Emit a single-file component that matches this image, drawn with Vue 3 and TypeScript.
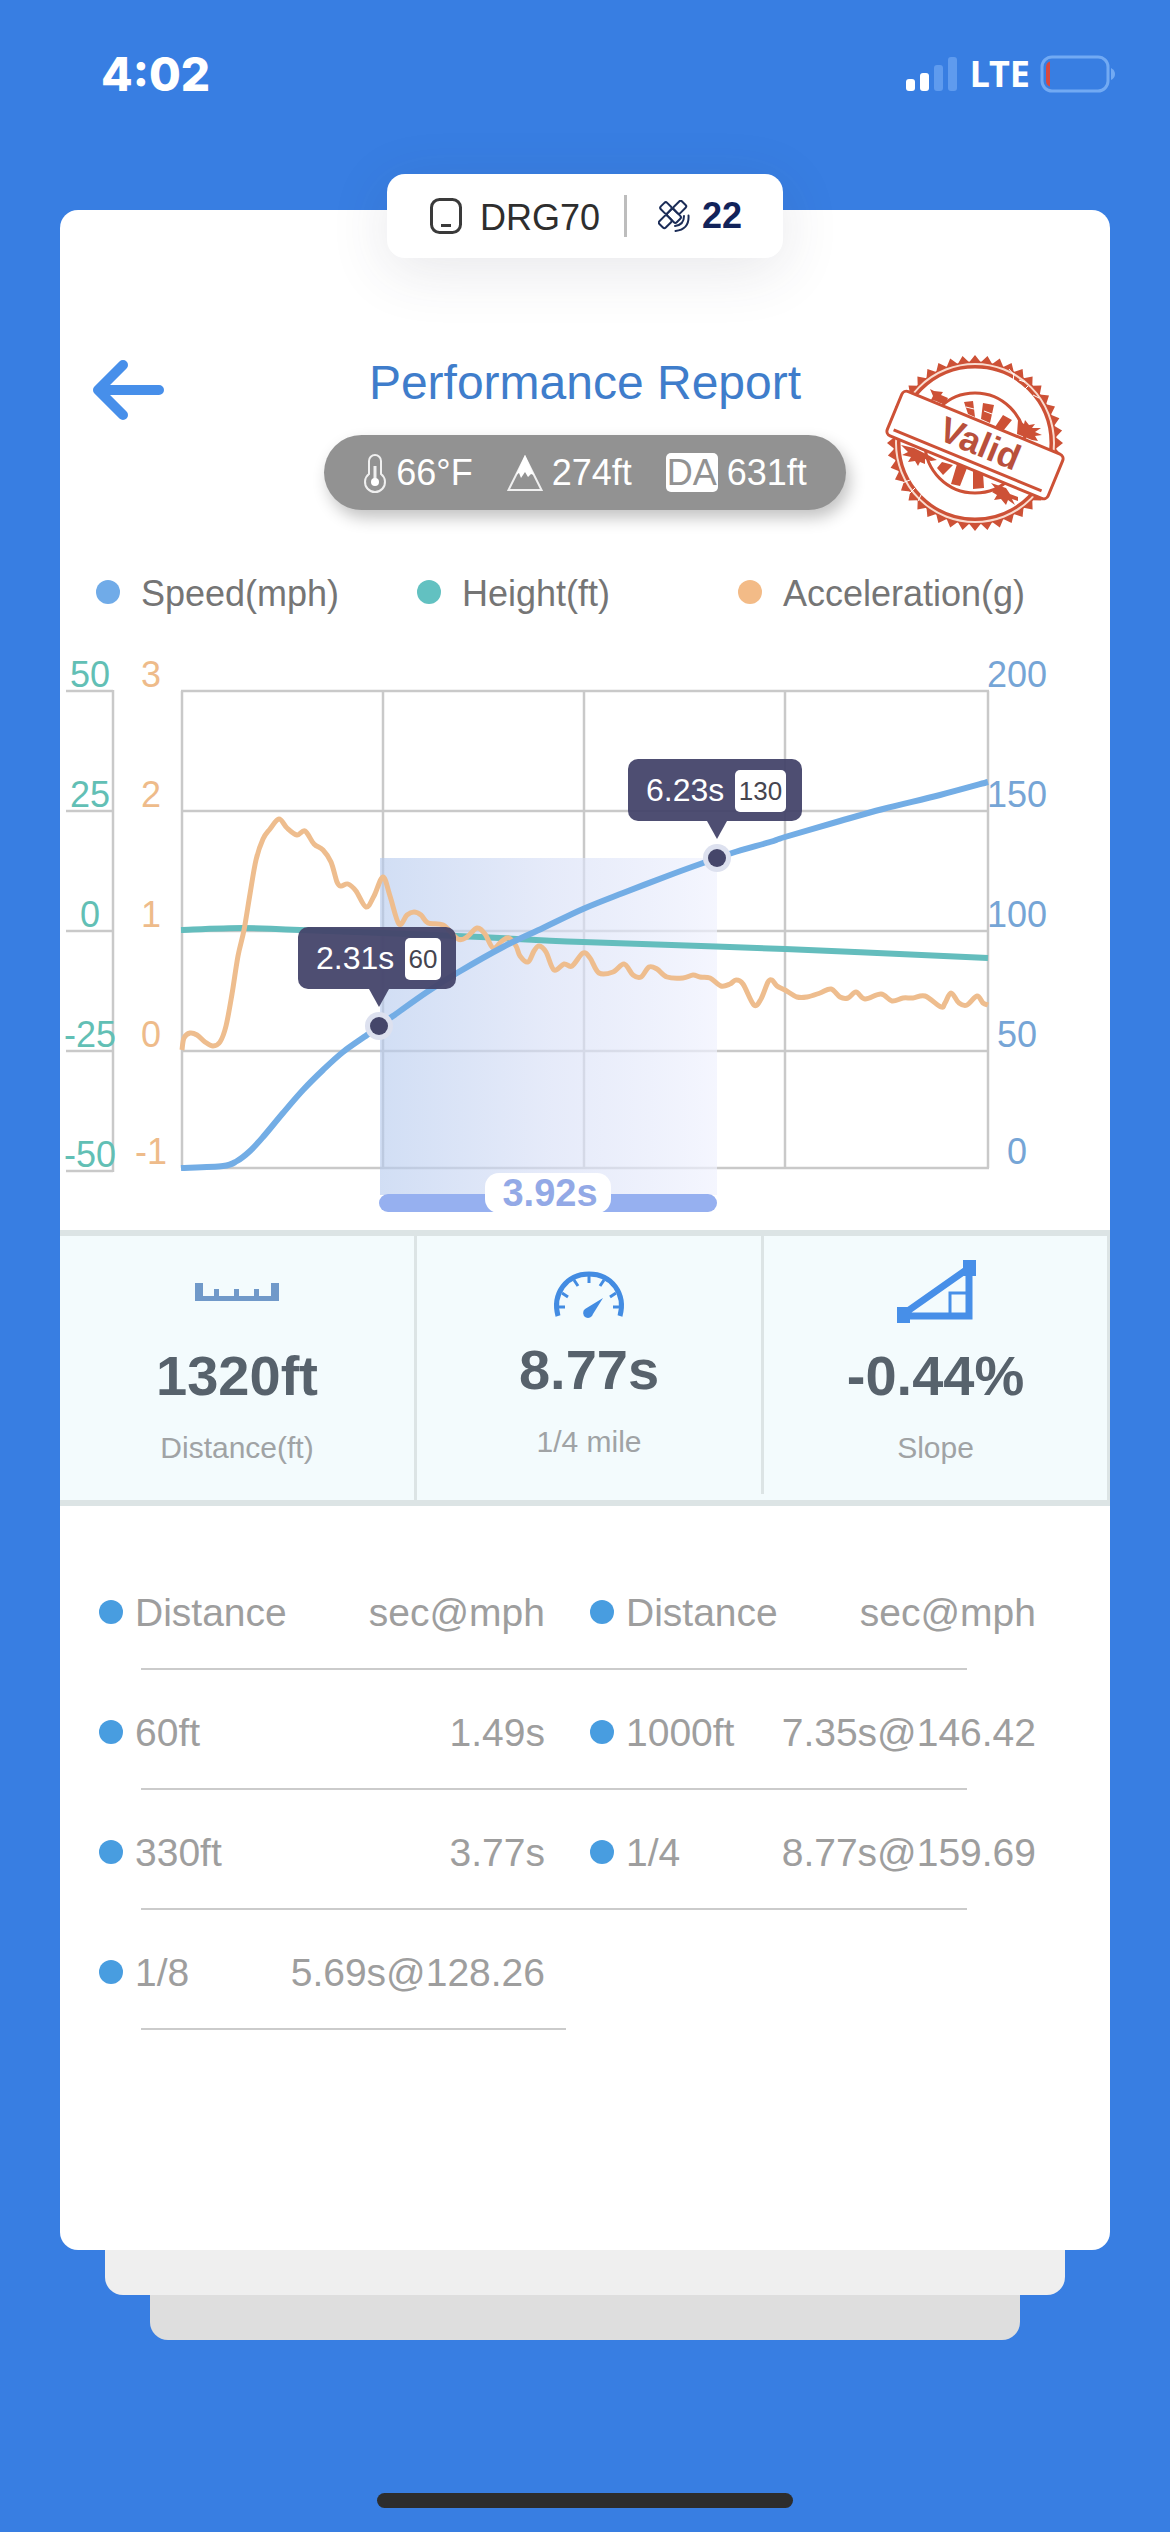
<script setup lang="ts">
type Point = [number, number]

interface Series {
  name: string
  color: string
  width: number
  points: Point[]
}

interface Marker {
  x: number
  y: number
  time: string
  speed: string
  left: number
  width: number
  badge: number
}

interface Split {
  distance: string
  result: string
}

const legend = [
  { label: 'Speed(mph)', color: '#70abe8' },
  { label: 'Height(ft)', color: '#62c1c1' },
  { label: 'Acceleration(g)', color: '#f3bb87' },
]

const rows = [41, 161, 281, 401, 518]
const columns = [122, 323, 524, 725, 928]
const leftTicks = [41, 161, 281, 401, 521]

const heightLabels = ['50', '25', '0', '-25', '-50']
const accelLabels = ['3', '2', '1', '0', '-1']
const speedLabels = ['200', '150', '100', '50', '0']
const labelBaselines = [37, 157, 277, 397, 514]

const series: Series[] = [
  {
    name: 'height',
    color: '#64bdbd',
    width: 6,
    points: [[121, 280], [183, 278], [240, 280], [397, 286], [523, 292], [725, 299], [928, 308]],
  },
  {
    name: 'acceleration',
    color: '#eebd8e',
    width: 5,
    points: [
      [122, 400], [124, 388], [130, 383], [137, 385], [145, 392], [153, 396], [160, 392], [166, 376],
      [172, 344], [178, 306], [184, 280], [190, 244], [196, 210], [203, 189], [210, 179], [219, 169],
      [227, 178], [237, 185], [245, 181], [254, 194], [263, 200], [271, 212], [277, 232], [281, 236],
      [288, 234], [296, 241], [306, 257], [314, 246], [323, 227], [330, 246], [339, 274], [347, 265],
      [354, 262], [361, 265], [368, 273], [383, 275], [398, 289], [407, 287], [417, 278], [425, 284],
      [433, 298], [442, 291], [449, 288], [456, 296], [460, 306], [468, 312], [474, 301], [479, 296],
      [486, 302], [494, 320], [504, 314], [512, 316], [523, 303], [530, 308], [539, 323], [553, 322],
      [564, 314], [573, 325], [581, 327], [589, 317], [597, 319], [607, 327], [623, 328], [633, 325],
      [640, 327], [650, 328], [661, 336], [670, 334], [676, 330], [683, 334], [694, 355], [701, 349],
      [708, 332], [712, 330], [717, 336], [725, 340], [737, 347], [747, 347], [760, 343], [771, 339],
      [780, 347], [788, 348], [796, 342], [805, 349], [821, 344], [832, 351], [843, 348], [853, 348],
      [865, 346], [881, 357], [885, 353], [891, 343], [899, 353], [907, 355], [917, 346], [923, 353],
      [928, 355],
    ],
  },
  {
    name: 'speed',
    color: '#73ade5',
    width: 6,
    points: [
      [121, 518], [163, 516], [177, 511], [190, 501], [203, 487], [223, 463], [243, 440], [263, 420],
      [283, 402], [307, 385], [319, 376], [333, 366], [367, 342], [397, 323], [443, 297], [483, 278],
      [523, 259], [563, 243], [610, 225], [643, 213], [672, 203], [710, 192], [725, 187], [780, 171],
      [823, 159], [880, 145], [928, 132],
    ],
  },
]

/* Catmull-Rom spline through the samples, written as cubic Béziers. */
function smoothPath(points: Point[]): string {
  let d = `M${points[0][0]} ${points[0][1]}`
  for (let i = 0; i < points.length - 1; i++) {
    const p0 = points[Math.max(i - 1, 0)]
    const p1 = points[i]
    const p2 = points[i + 1]
    const p3 = points[Math.min(i + 2, points.length - 1)]
    d += ` C${p1[0] + (p2[0] - p0[0]) / 6} ${p1[1] + (p2[1] - p0[1]) / 6}`
    d += ` ${p2[0] - (p3[0] - p1[0]) / 6} ${p2[1] - (p3[1] - p1[1]) / 6} ${p2[0]} ${p2[1]}`
  }
  return d
}

const markers: Marker[] = [
  { x: 319, y: 376, time: '2.31s', speed: '60', left: 238, width: 158, badge: 36 },
  { x: 657, y: 208, time: '6.23s', speed: '130', left: 568, width: 174, badge: 51 },
]

/* Serrated rim of the stamp. */
const teeth = 44
const rim = Array.from({ length: teeth * 2 }, (_, i) => {
  const radius = i % 2 === 0 ? 88 : 81
  const angle = (Math.PI * i) / teeth
  return `${(90 + radius * Math.sin(angle)).toFixed(1)},${(88 - radius * Math.cos(angle)).toFixed(1)}`
}).join(' ')

const splitRows: Split[][] = [
  [{ distance: '60ft', result: '1.49s' }, { distance: '1000ft', result: '7.35s@146.42' }],
  [{ distance: '330ft', result: '3.77s' }, { distance: '1/4', result: '8.77s@159.69' }],
  [{ distance: '1/8', result: '5.69s@128.26' }],
]
</script>

<template>
  <div class="screen">
    <div class="status-bar">
      <span class="clock">4:02</span>
      <div class="status-icons">
        <svg width="52" height="34" viewBox="0 0 52 34" aria-label="Signal">
          <rect x="0" y="22" width="9" height="12" rx="3" fill="#fff" />
          <rect x="14" y="16" width="9" height="18" rx="3" fill="#fff" />
          <rect x="28" y="8" width="9" height="26" rx="3" fill="#5f9bee" />
          <rect x="42" y="0" width="9" height="34" rx="3" fill="#5f9bee" />
        </svg>
        <span class="network">LTE</span>
        <svg width="76" height="38" viewBox="0 0 76 38" aria-label="Battery">
          <rect x="2" y="2" width="66" height="34" rx="10" fill="none" stroke="#72aaf3" stroke-width="3" />
          <path d="M10 6.500v25q-4-1-4-6v-13q0-5 4-6z" fill="#d9493f" />
          <path d="M71 13q4 2 4 6t-4 6z" fill="#72aaf3" />
        </svg>
      </div>
    </div>

    <header class="device-tab">
      <svg class="device-icon" width="32" height="36" viewBox="0 0 32 36" fill="none" stroke="#3a3a3a">
        <rect x="1.500" y="1.500" width="29" height="33" rx="8" stroke-width="3" />
        <path d="M11 27.500h10" stroke-width="3" />
      </svg>
      <span class="device-name">DRG70</span>
      <span class="tab-divider"></span>
      <svg width="32" height="32" viewBox="0 0 32 32" fill="none" stroke="#1b2c57" stroke-width="2" stroke-linecap="round" stroke-linejoin="round">
        <g transform="translate(14.500 14.500) rotate(45)">
          <rect x="-14" y="-4.500" width="9.500" height="9" rx="2" />
          <rect x="-4.500" y="-4.500" width="13" height="9" rx="2" />
          <rect x="-4.500" y="-16" width="9" height="11.500" rx="2" />
          <rect x="-4.500" y="4.500" width="9" height="11.500" rx="2" />
        </g>
        <path d="M26 16q0 9-9 10M30.500 15.500q1 14-13 15.500" />
      </svg>
      <strong class="satellites">22</strong>
    </header>

    <main class="card">
      <section class="report-head">
        <button class="back" type="button" aria-label="Back">
          <svg width="72" height="60" viewBox="0 0 72 60" fill="none" stroke="#478fea" stroke-width="10" stroke-linecap="round" stroke-linejoin="round">
            <path d="M67 30H6M31 5L6 30l25 25" />
          </svg>
        </button>
        <div class="head-center">
          <h1>Performance Report</h1>
          <div class="conditions">
            <span class="condition">
              <svg width="24" height="40" viewBox="0 0 24 40" fill="none" stroke="#f0f0f0" stroke-width="2">
                <path d="M6 8a6 6 0 0 1 12 0v13a10 10 0 1 1-12 0z" />
                <path d="M12 13v16" stroke-width="3" />
                <circle cx="12" cy="29" r="4" fill="#fff" stroke="none" />
              </svg>
              66°F
            </span>
            <span class="condition">
              <svg width="36" height="38" viewBox="0 0 36 38">
                <path d="M18 3L34.500 36h-33z" fill="none" stroke="#f0f0f0" stroke-width="2" />
                <path d="M18 1L27 21l-3-1-3 3-3-5-4 6-2-5-3 2z" fill="#fff" />
              </svg>
              274ft
            </span>
            <span class="condition">
              <span class="da-badge">DA</span>
              631ft
            </span>
          </div>
        </div>
        <svg class="stamp" width="180" height="176" viewBox="0 0 180 176">
          <polygon :points="rim" fill="#cd5136" />
          <circle cx="90" cy="88" r="78" fill="#fff" stroke="#cd5136" stroke-width="7" />
          <circle cx="90" cy="88" r="79" fill="none" stroke="#fadccf" stroke-width="2" />
          <circle cx="90" cy="88" r="50" fill="none" stroke="#cd5136" stroke-width="3" />
          <g fill="#cd5136">
            <path d="M79 47l9-1 2 16-7-3zM98 48l11 2-4 18-9-4zM118 60l9 5-9 11-8-4z" />
            <path d="M52 113l5-6 11 3-10 10zM72 109l10 4-7 18-9-2zM88 115l10 3 1 15-11 1z" />
            <path d="M45 34l4 2 9 1-2 3 7 3-3 6-5-1-4-2-5-1 2-4zM133 65l6 4 1-4 4 5 6-1-3 4 9 0-6 4 7 3-7 1 3 5-6-1-15-6z" />
            <path d="M16 90l13 3 14 7 9 5-6 1-6-2 0 5-5-2-2 4-3-5-7 1 3-5-9-2 6-3zM106 128l15 5 4 6 8 3 0 4-6-2 3 6-7-5-2 5-5-6-7 1 3-5-5-3 4-3z" />
          </g>
          <g stroke="#fff" stroke-width="1" fill="none">
            <path d="M124 14l5 6M129 18l-1 9M134 25l6 2M143 31l-5 5M148 40l6 3M17 128l8-3M24 139l6-6M33 146l4-8M81 52l8 2M99 56l8 3" />
          </g>
          <g transform="translate(90 90) rotate(22.400)">
            <rect x="-87" y="-24" width="174" height="48" rx="5" fill="#fff" stroke="#cd5136" stroke-width="3" />
            <path d="M-81 17H79" stroke="#cd5136" stroke-width="3" />
            <text x="4" y="9" class="stamp-text">Valid</text>
          </g>
        </svg>
      </section>

      <ul class="legend">
        <li v-for="item in legend" :key="item.label">
          <span class="dot" :style="{ background: item.color }"></span>
          {{ item.label }}
        </li>
      </ul>

      <svg class="chart" viewBox="0 0 1050 580" role="img" aria-label="Speed, height and acceleration over time">
        <defs>
          <linearGradient id="interval" x1="0" x2="1" y1="0" y2="0">
            <stop offset="0" stop-color="#b5caee" stop-opacity="0.620" />
            <stop offset="0.500" stop-color="#d6def6" stop-opacity="0.620" />
            <stop offset="1" stop-color="#f0f2fe" stop-opacity="0.700" />
          </linearGradient>
        </defs>

        <g stroke="#c9c9c9" stroke-width="2.500" fill="none">
          <path v-for="y in rows" :key="`r${y}`" :d="`M121 ${y}H929`" />
          <path v-for="x in columns" :key="`c${x}`" :d="`M${x} 41V518`" />
          <path v-for="y in leftTicks" :key="`t${y}`" :d="`M6 ${y}H53`" />
          <path d="M53 40V522" />
        </g>

        <rect x="320" y="208" width="337" height="337" fill="url(#interval)" />

        <g class="axis">
          <text v-for="(label, i) in heightLabels" :key="`h${label}`" x="30" :y="leftTicks[i] - 4" fill="#62bfb5">{{ label }}</text>
          <text v-for="(label, i) in accelLabels" :key="`a${label}`" x="91" :y="labelBaselines[i]" fill="#eebb8a">{{ label }}</text>
          <text v-for="(label, i) in speedLabels" :key="`s${label}`" x="957" :y="labelBaselines[i]" fill="#76a5d6">{{ label }}</text>
        </g>

        <path
          v-for="line in series"
          :key="line.name"
          :d="smoothPath(line.points)"
          :stroke="line.color"
          :stroke-width="line.width"
          fill="none"
        />

        <g v-for="marker in markers" :key="marker.time">
          <circle :cx="marker.x" :cy="marker.y" r="14" fill="#dde1ef" />
          <circle :cx="marker.x" :cy="marker.y" r="9" fill="#45466a" />
          <g fill="#45446a" fill-opacity="0.950">
            <rect :x="marker.left" :y="marker.y - 99" :width="marker.width" height="62" rx="10" />
            <path :d="`M${marker.x - 10} ${marker.y - 37}h20l-10 18z`" />
          </g>
          <text class="marker-time" :x="marker.left + 18" :y="marker.y - 57">{{ marker.time }}</text>
          <rect :x="marker.left + 107" :y="marker.y - 88" :width="marker.badge" height="42" rx="5" fill="#fff" />
          <text class="marker-speed" :x="marker.left + 107 + marker.badge / 2" :y="marker.y - 58">{{ marker.speed }}</text>
        </g>

        <rect x="319" y="544" width="338" height="18" rx="9" fill="#96b0f0" />
        <rect x="425" y="523" width="126" height="40" rx="14" fill="#fff" />
        <text class="interval-label" x="490" y="556">3.92s</text>
      </svg>

      <section class="stats">
        <div class="stat">
          <svg width="96" height="64" viewBox="0 0 96 64">
            <path d="M6 23h8v13h11v-7h5v7h15v-7h5v7h15v-7h5v7h12v-13h8v18H6z" fill="#7099c9" />
          </svg>
          <strong>1320ft</strong>
          <span>Distance(ft)</span>
        </div>
        <div class="stat middle">
          <svg width="96" height="64" viewBox="0 0 96 64" fill="none" stroke="#438ce2">
            <path d="M17 56C11 34 25 14 48 14s37 20 31 42" stroke-width="5" />
            <path d="M18 47h6M21 33l6 4M33 20l4 6M48 15v8M63 20l-4 6M75 33l-6 4M78 47h-6" stroke-width="3" />
            <path d="M62 38L52 54a5 5 0 1 1-8-5z" fill="#438ce2" stroke="none" />
          </svg>
          <strong>8.77s</strong>
          <span>1/4 mile</span>
        </div>
        <div class="stat">
          <svg width="96" height="64" viewBox="0 0 96 64" fill="none" stroke="#478fe8">
            <path d="M14 55L81 8v48H14z" stroke-width="7" />
            <path d="M62 55V33h18" stroke-width="3" />
            <path d="M75 0h13v16H75zM9 47h13v16H9z" fill="#478fe8" stroke="none" />
          </svg>
          <strong>-0.44%</strong>
          <span>Slope</span>
        </div>
      </section>

      <table class="splits">
        <thead>
          <tr>
            <th scope="col"><span class="dot"></span>Distance</th>
            <th scope="col" class="result">sec@mph</th>
            <th scope="col"><span class="dot"></span>Distance</th>
            <th scope="col" class="result">sec@mph</th>
          </tr>
        </thead>
        <tbody>
          <tr v-for="(row, i) in splitRows" :key="i" :class="{ short: row.length === 1 }">
            <template v-for="split in row" :key="split.distance">
              <td><span class="dot"></span>{{ split.distance }}</td>
              <td class="result">{{ split.result }}</td>
            </template>
          </tr>
        </tbody>
      </table>
    </main>
    <div class="sheet second"></div>
    <div class="sheet third"></div>

    <div class="home-indicator"></div>
  </div>
</template>

<style>
body {
  margin: 0;
  background: #387ee2;
}
</style>

<style scoped>
.screen {
  display: flex;
  flex-direction: column;
  box-sizing: border-box;
  min-height: 100vh;
  padding-bottom: 24px;
  background: #387ee2;
  font-family: "Liberation Sans", Arial, sans-serif;
}

.status-bar {
  display: flex;
  justify-content: space-between;
  align-items: center;
  height: 148px;
  margin-bottom: 26px;
  padding: 0 54px 0 101px;
  color: #fff;
  font-family: Inter, "Liberation Sans", sans-serif;
}

.clock {
  font-size: 46px;
  font-weight: 800;
}

.status-icons {
  display: flex;
  align-items: center;
  gap: 12px;
}

.network {
  font-family: "Noto Sans", "Liberation Sans", sans-serif;
  font-size: 36px;
  font-weight: 700;
  line-height: 40px;
}

.status-icons .network {
  margin-right: -2px;
}

.device-tab {
  position: relative;
  z-index: 1;
  display: flex;
  align-items: center;
  align-self: center;
  box-sizing: border-box;
  height: 84px;
  margin-bottom: -48px;
  padding: 0 41px 0 43px;
  border-radius: 18px;
  background: #fff;
  box-shadow: 0 12px 60px rgba(60, 60, 80, 0.12);
  font-size: 36px;
}

.device-name {
  margin-left: 18px;
  padding-top: 4px;
  color: #2e2e2e;
}

.tab-divider {
  width: 3px;
  height: 42px;
  margin: 0 31px 0 24px;
  background: #bdbdbd;
}

.satellites {
  margin-left: 12px;
  color: #12235a;
}

.card {
  margin: 0 60px;
  padding: 145px 0 220px;
  border-radius: 18px;
  background: #fff;
}

.report-head {
  display: grid;
  grid-template-columns: 1fr auto 1fr;
  align-items: start;
  padding: 0 45px 0 32px;
}

.back {
  justify-self: start;
  height: 60px;
  margin-top: 5px;
  padding: 0;
  border: 0;
  background: none;
  cursor: pointer;
}

.head-center {
  display: flex;
  flex-direction: column;
  align-items: center;
  gap: 24px;
  margin-left: 13px;
}

h1 {
  margin: 0;
  color: #3f7dcb;
  font-size: 48px;
  font-weight: 400;
  line-height: 56px;
}

.conditions {
  display: flex;
  align-items: center;
  gap: 34px;
  height: 75px;
  padding: 0 39px;
  border-radius: 38px;
  background: #929292;
  box-shadow: 4px 8px 16px rgba(0, 0, 0, 0.24);
  color: #fff;
  font-size: 36px;
  white-space: nowrap;
}

.condition {
  display: flex;
  align-items: center;
  gap: 9px;
}

.da-badge {
  padding: 0 1px;
  border-radius: 5px;
  background: #fff;
  color: #929292;
  line-height: 39px;
}

.stamp {
  justify-self: end;
}

.stamp-text {
  fill: #b9503c;
  font-size: 36px;
  font-weight: 700;
  text-anchor: middle;
}

.legend {
  display: grid;
  grid-template-columns: 321fr 321fr 372fr;
  margin: 42px 0 35px;
  padding: 0 0 0 36px;
  color: #757575;
  font-size: 36px;
  line-height: 42px;
  list-style: none;
}

.legend li {
  display: flex;
  align-items: center;
  gap: 21px;
}

.legend .dot {
  margin-bottom: 4px;
}

.dot {
  flex: none;
  width: 24px;
  height: 24px;
  border-radius: 50%;
  background: #489de0;
}

.chart {
  display: block;
  width: 100%;
}

.axis {
  font-size: 36px;
  text-anchor: middle;
}

.marker-time {
  fill: #fff;
  font-size: 32px;
}

.marker-speed {
  fill: #45454f;
  font-size: 26px;
  text-anchor: middle;
}

.interval-label {
  fill: #93a9e6;
  font-size: 38px;
  font-weight: 700;
  text-anchor: middle;
}

.stats {
  display: grid;
  grid-template-columns: 357fr 347fr 346fr;
  align-items: start;
  border: solid #dce4e5;
  border-width: 6px 0;
  background: #f3fbfd;
}

.stat {
  display: flex;
  flex-direction: column;
  align-items: center;
  box-sizing: border-box;
  height: 264px;
  padding-top: 24px;
  border-right: 3px solid #dce4e5;
}

.stat strong {
  margin: 20px 0 22px;
  color: #57626c;
  font-size: 56px;
  line-height: 64px;
}

.stat span {
  color: #a0a3a5;
  font-size: 30px;
  line-height: 36px;
}

.stat.middle {
  height: 258px;
}

.stat.middle strong {
  margin-top: 14px;
}

.splits {
  display: block;
  margin: 44px 74px 0 39px;
  color: #9e9e9e;
  font-size: 39px;
  line-height: 44px;
}

.splits thead,
.splits tbody {
  display: block;
}

.splits tr {
  display: grid;
  grid-template-columns: 168px 1fr 45px 168px 1fr;
}

.splits th,
.splits td {
  display: flex;
  align-items: center;
  gap: 12px;
  padding: 41px 0 33px;
  font-weight: 400;
}

.splits .dot {
  margin-bottom: 2px;
}

.splits .result {
  justify-content: flex-end;
}

.splits tr > :nth-child(3) {
  grid-column: 4;
}

.splits tr::after {
  grid-column: 1 / -1;
  height: 2px;
  margin: 0 69px 0 42px;
  background: #cbcbcb;
  content: "";
}

.splits .short::after {
  grid-column: 1 / 4;
  margin-right: 24px;
}

.sheet {
  height: 45px;
  border-radius: 0 0 18px 18px;
}

.second {
  margin: 0 105px;
  background: #efefef;
}

.third {
  margin: 0 150px;
  background: #dedede;
}

.home-indicator {
  align-self: center;
  width: 416px;
  height: 15px;
  margin-top: auto;
  border-radius: 8px;
  background: #2d2d2d;
}
</style>
